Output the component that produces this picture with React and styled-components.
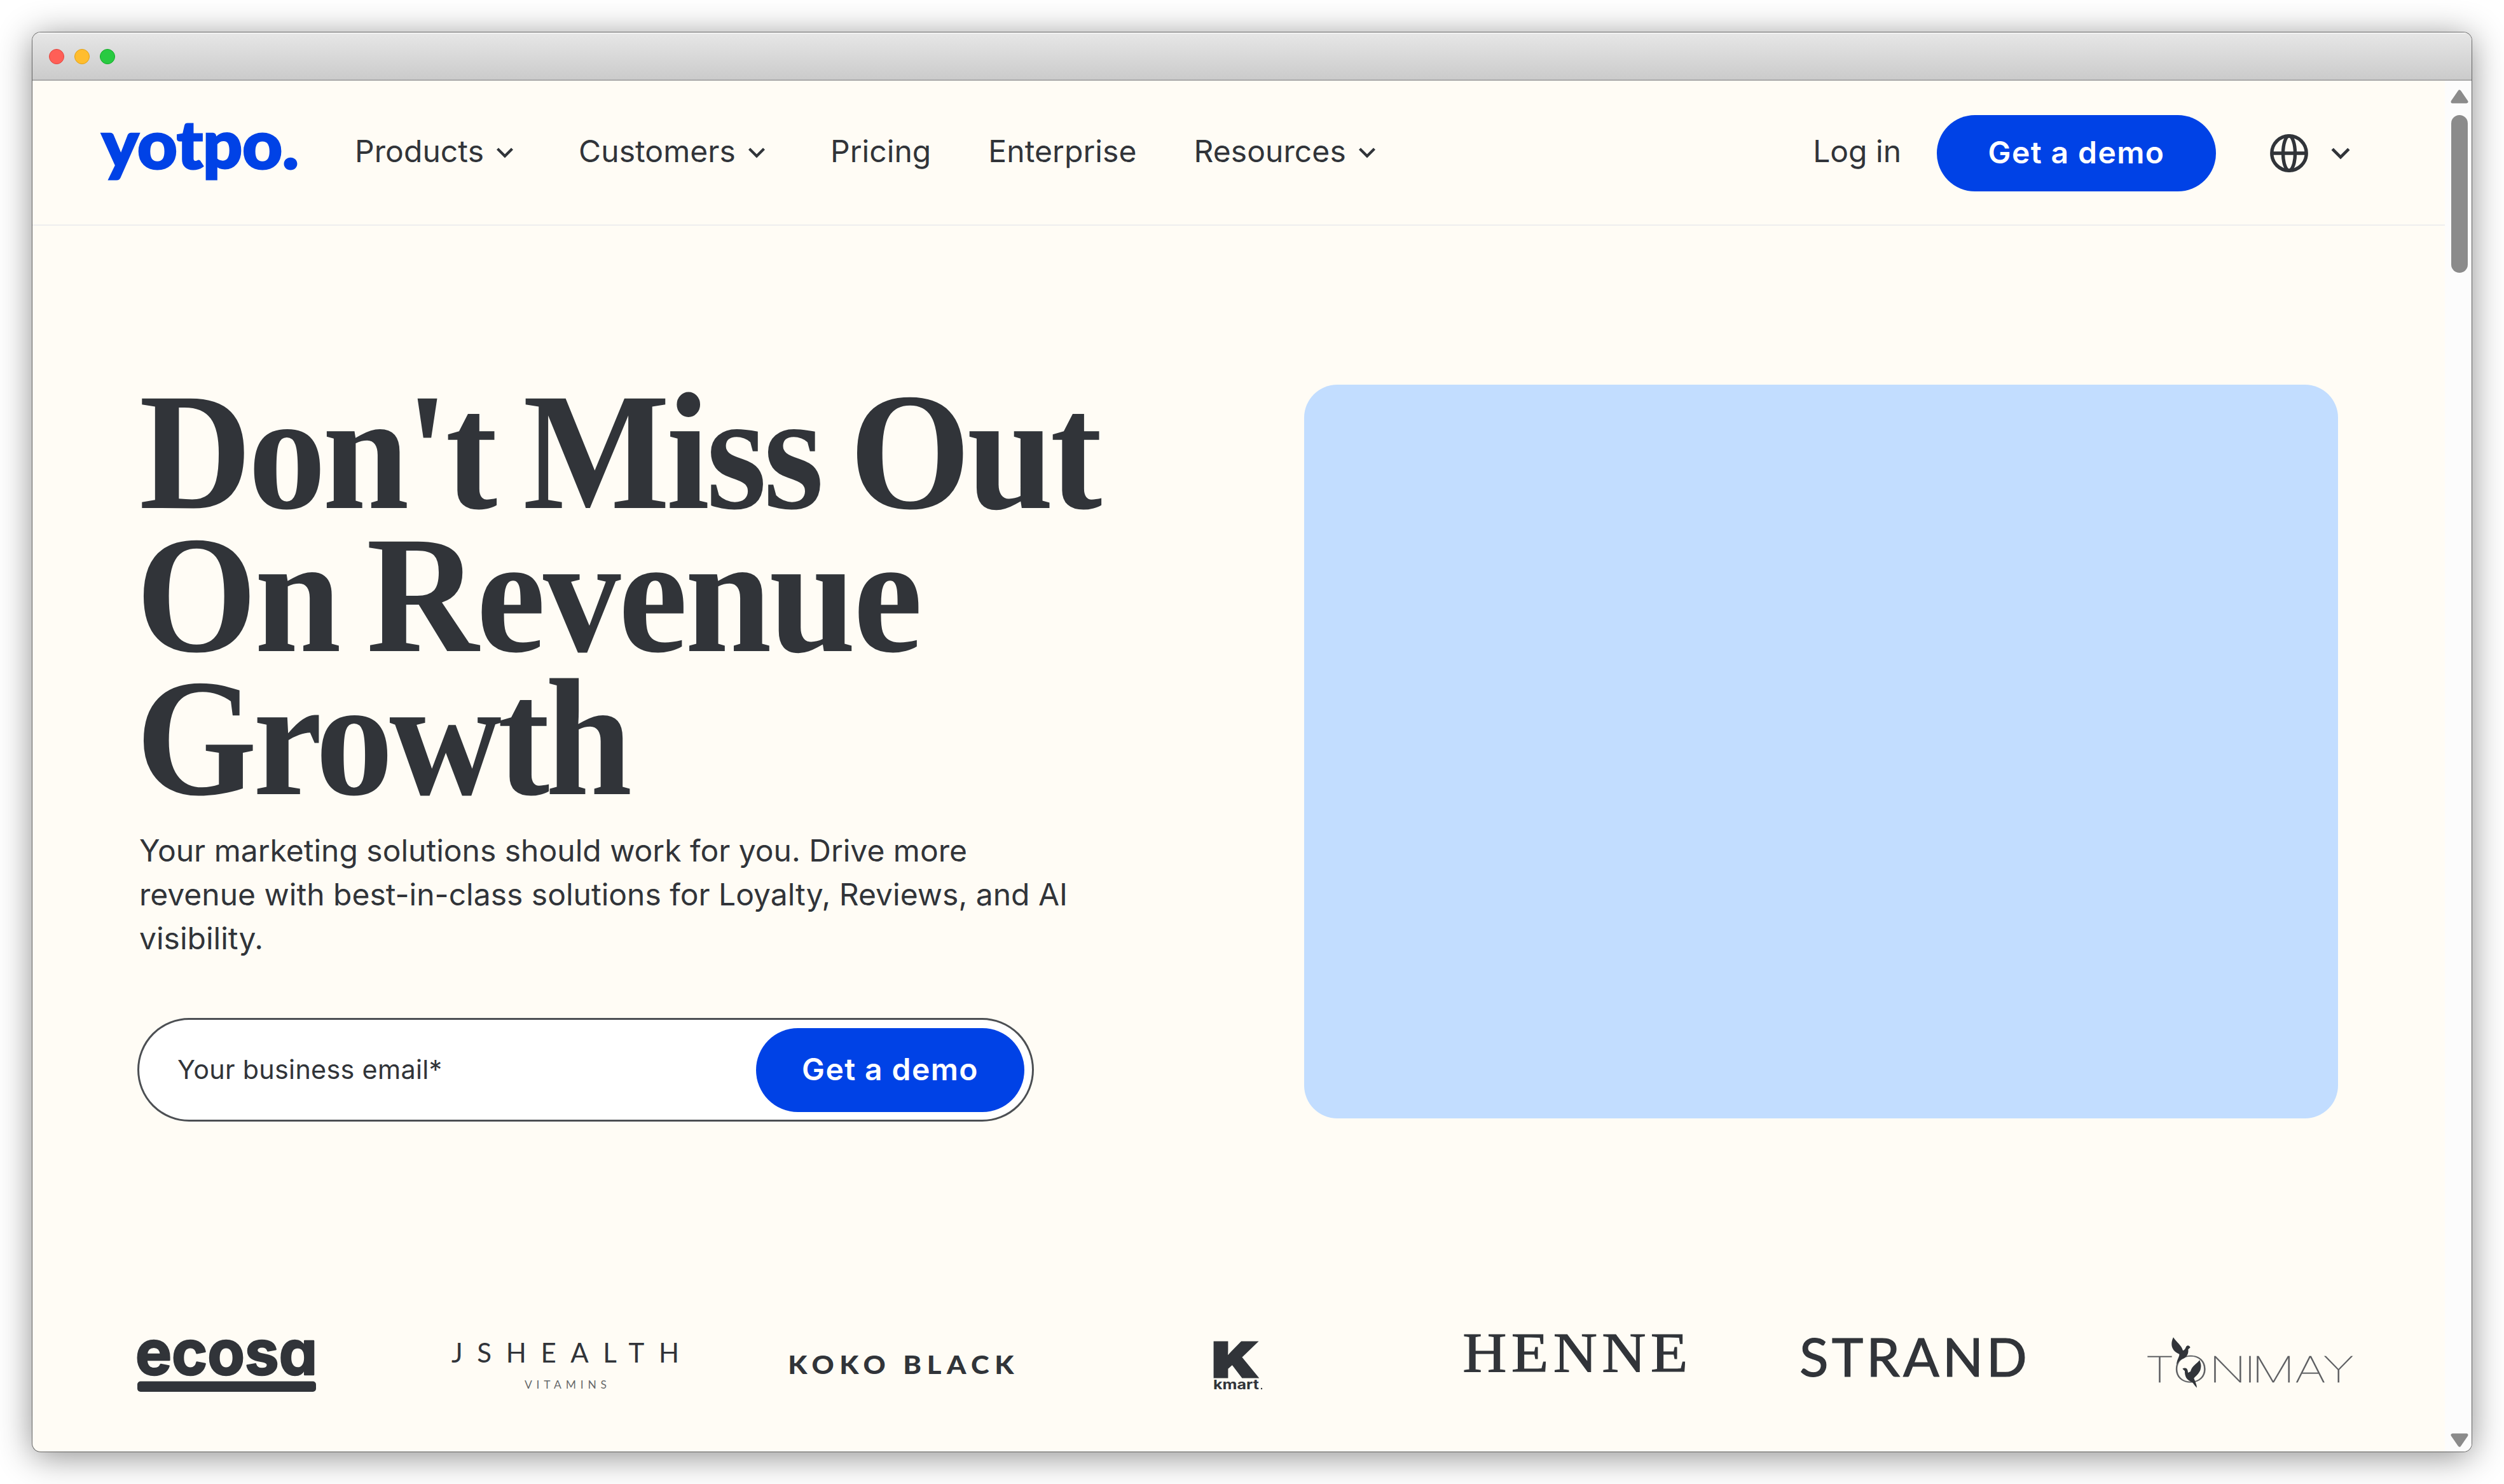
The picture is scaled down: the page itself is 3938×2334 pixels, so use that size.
import React from "react";
import styled, { createGlobalStyle } from "styled-components";

const ink = "#313439";
const blue = "#0042e6";
const cream = "#fffcf5";

const Global = createGlobalStyle`
  *, *::before, *::after { box-sizing: border-box; }
  html, body { margin: 0; background: #fff; overflow: hidden; }
  body {
    font-family: Inter, "Liberation Sans", sans-serif;
    color: ${ink};
    font-size: 48px;
  }
  button { font: inherit; border: 0; margin: 0; padding: 0; }
`;

const Desktop = styled.div`
  height: 2334px;
  padding: 51px;
`;

const Window = styled.div`
  display: flex;
  flex-direction: column;
  height: 2232px;
  border-radius: 13px;
  overflow: hidden;
  background: ${cream};
  box-shadow: 0 0 0 1px rgba(0, 0, 0, 0.5), 0 7px 54px rgba(0, 0, 0, 0.46);
`;

const TitleBar = styled.div`
  display: flex;
  align-items: center;
  gap: 16px;
  flex: none;
  height: 76px;
  padding-left: 26px;
  background: linear-gradient(#e6e6e6, #cbcbcb);
  border-top: 2px solid #f2f2f2;
  border-bottom: 2px solid #a9a9a9;
`;

const Light = styled.span`
  width: 24px;
  height: 24px;
  border-radius: 50%;
  background: ${(p) => p.$fill};
  border: 1px solid ${(p) => p.$edge};
`;

const Viewport = styled.div`
  display: flex;
  flex: 1;
  min-height: 0;
`;

const Page = styled.div`
  flex: 1;
  min-width: 0;
`;

const Header = styled.header`
  display: flex;
  align-items: center;
  height: 228px;
  padding: 2px 144px 0 105px;
  border-bottom: 2px solid #eeeeee;
`;

const Brand = styled.svg`
  flex: none;
  width: 320px;
  height: 120px;
  overflow: visible;
`;

const Nav = styled.nav`
  display: flex;
  gap: 90px;
  margin-left: 82px;
  padding-bottom: 7px;
`;

const NavItem = styled.a`
  display: flex;
  align-items: center;
  line-height: 58px;
  letter-spacing: 0.07px;
  white-space: nowrap;
`;

const NavChevron = styled.svg`
  width: 34px;
  height: 34px;
  margin: 4px 9px 0 16px;
`;

const Actions = styled.div`
  display: flex;
  align-items: center;
  margin-left: auto;
`;

const LogIn = styled.a`
  margin-right: 56px;
  padding-bottom: 7px;
  line-height: 58px;
  white-space: nowrap;
`;

const Cta = styled.button`
  display: flex;
  align-items: center;
  justify-content: center;
  flex: none;
  width: ${(p) => (p.$tall ? 422 : 439)}px;
  height: ${(p) => (p.$tall ? 132 : 120)}px;
  padding-bottom: 3px;
  border-radius: 70px;
  background: ${blue};
  color: #fff;
  font-weight: 600;
  letter-spacing: 1.4px;
  white-space: nowrap;
`;

const Language = styled.div`
  display: flex;
  align-items: center;
  gap: 30px;
  margin-left: 83px;
  padding-right: 1px;
`;

const GlobeIcon = styled.svg`
  width: 64px;
  height: 64px;
`;

const LangChevron = styled.svg`
  width: 38px;
  height: 38px;
`;

const Hero = styled.section`
  display: flex;
  justify-content: space-between;
  padding: 243px 168px 0 165px;
`;

const Pitch = styled.div`
  width: 1520px;
`;

const Headline = styled.h1`
  margin: 0 0 30px 3px;
  font-family: "Liberation Serif", serif;
  font-weight: 700;
  font-size: 263px;
  line-height: 225px;
`;

const HeadlineRow = styled.span`
  display: block;
  width: max-content;
  margin-left: ${(p) => p.$outdent || 0}px;
  white-space: nowrap;
  letter-spacing: ${(p) => p.$track}px;
  word-spacing: ${(p) => p.$gap || 0}px;
  transform: scaleX(0.93);
  transform-origin: left center;
`;

const Lead = styled.p`
  width: 1480px;
  margin: 0 0 91px 3px;
  line-height: 69px;
`;

const EmailForm = styled.div`
  display: flex;
  align-items: center;
  justify-content: space-between;
  width: 1410px;
  height: 163px;
  padding: 0 12px 0 60px;
  border: 3px solid #4c4f53;
  border-radius: 82px;
  background: #fff;
`;

const Placeholder = styled.span`
  padding-bottom: 2px;
  font-size: 41.3px;
  letter-spacing: 0.3px;
`;

const HeroMedia = styled.div`
  width: 1626px;
  height: 1154px;
  margin-top: 7px;
  border-radius: 52px;
  background: #c2ddff;
`;

const Clients = styled.section`
  display: grid;
  grid-template-columns: repeat(7, 530.3px);
  justify-items: center;
  margin-top: 316px;
  padding-left: 40px;
`;

const ClientLogo = styled.svg`
  width: 370px;
  height: 120px;
  overflow: visible;
  fill: ${ink};
`;

const RoundedWord = styled.text`
  font-feature-settings: "cv11";
  stroke: ${ink};
  stroke-linejoin: round;
`;

const Scrollbar = styled.div`
  display: flex;
  flex-direction: column;
  align-items: center;
  flex: none;
  width: 42px;
  padding: 13px 0 6px 4px;
  background: #fcfcfc;
`;

const Arrow = styled.svg`
  flex: none;
  width: 30px;
  height: 24px;
  fill: #8b8b8b;
  stroke: #8b8b8b;
  stroke-width: 5;
  stroke-linejoin: round;
`;

const Thumb = styled.div`
  width: 26px;
  height: 248px;
  margin: 17px 0 auto;
  border-radius: 13px;
  background: #8b8b8b;
`;

const Chevron = ({ as: Icon }) => (
  <Icon viewBox="0 0 34 34" fill="none" stroke={ink} strokeWidth="4.2">
    <path d="M5.5 11 L17 22.5 L28.5 11" />
  </Icon>
);

const navigation = [
  { label: "Products", menu: true },
  { label: "Customers", menu: true },
  { label: "Pricing" },
  { label: "Enterprise" },
  { label: "Resources", menu: true },
];

const Ecosa = () => (
  <ClientLogo viewBox="0 0 370 120">
    <RoundedWord x="42" y="82" fontFamily="Inter" fontWeight="700" fontSize="97" textLength="286" lengthAdjust="spacingAndGlyphs" strokeWidth="2.5">ecosa</RoundedWord>
    <rect x="45" y="92.5" width="281" height="16.5" rx="5" />
  </ClientLogo>
);

const JsHealth = () => (
  <ClientLogo viewBox="0 0 370 120">
    <text x="9" y="63" fontFamily="Lato" fontSize="42" textLength="358">JSHEALTH</text>
    <text x="124" y="104" fontFamily="Lato" fontSize="17.5" textLength="129" fillOpacity="0.75">VITAMINS</text>
  </ClientLogo>
);

const KokoBlack = () => (
  <ClientLogo viewBox="0 0 370 120">
    <text transform="scale(1.1 1)" x="6.5" y="81" fontFamily="Lato" fontWeight="900" fontSize="39.5" textLength="323">KOKO BLACK</text>
  </ClientLogo>
);

const Kmart = () => (
  <ClientLogo viewBox="0 0 370 120">
    <text x="144" y="85.5" fontFamily="Inter" fontWeight="900" fontSize="75" textLength="73" lengthAdjust="spacingAndGlyphs" stroke={ink} strokeWidth="3">K</text>
    <text x="146" y="105" fontFamily="Inter" fontWeight="700" fontSize="20.5" textLength="72" lengthAdjust="spacingAndGlyphs">kmart</text>
    <circle cx="222" cy="104" r="1.2" />
  </ClientLogo>
);

const Henne = () => (
  <ClientLogo viewBox="0 0 370 120">
    <text transform="scale(1.09 1)" x="7.5" y="77" fontFamily="Liberation Serif" fontSize="88" textLength="325" stroke={ink} strokeWidth="1">HENNE</text>
  </ClientLogo>
);

const Strand = () => (
  <ClientLogo viewBox="0 0 370 120">
    <text x="7" y="85" fontFamily="Lato" fontSize="84" textLength="358" stroke={ink} strokeWidth="1.2">STRAND</text>
  </ClientLogo>
);

const Tonimay = () => (
  <ClientLogo viewBox="0 0 370 120">
    <text transform="scale(1.35 1)" x="14.8 47.2 89.6 130.4 139.3 189.6 222.4" y="94" fontFamily="Inter" fontWeight="100" fontSize="56.5" fillOpacity="0.75" stroke={ink} strokeOpacity="0.5" strokeWidth="0.8">TONIMAY</text>
    <g transform="translate(7 15) scale(0.3333)">
      <path d="M174 25 C166 40 163 60 170 76 C176 90 188 98 202 104 C204 116 190 128 189 156 C195 140 208 130 220 126 C236 120 247 104 244 82 L254 73 C250 62 240 61 235 68 C230 76 230 84 219 87 C212 62 190 50 174 25Z" />
      <path d="M217 173 L228 184 C228 208 234 226 262 236 C270 244 276 254 285 263 C285 248 276 232 271 218 C284 204 300 192 303 172 C307 154 302 146 298 132 C286 150 262 158 255 186 L243 192 C243 172 232 164 217 173Z" />
    </g>
  </ClientLogo>
);

export default function App() {
  return (
    <>
      <Global />
      <Desktop>
        <Window>
          <TitleBar>
            <Light $fill="#ff5f57" $edge="#e2463f" />
            <Light $fill="#ffbd2e" $edge="#e1a116" />
            <Light $fill="#28ca41" $edge="#12ac28" />
          </TitleBar>
          <Viewport>
            <Page>
              <Header>
                <Brand viewBox="0 0 320 120" fill={blue}>
                  <text x="4" y="83.5" fontFamily="Lato" fontWeight="900" fontSize="104" textLength="310" lengthAdjust="spacingAndGlyphs" stroke={blue} strokeWidth="3">yotpo.</text>
                </Brand>
                <Nav>
                  {navigation.map((item) => (
                    <NavItem key={item.label}>
                      {item.label}
                      {item.menu && <Chevron as={NavChevron} />}
                    </NavItem>
                  ))}
                </Nav>
                <Actions>
                  <LogIn>Log in</LogIn>
                  <Cta>Get a demo</Cta>
                  <Language>
                    <GlobeIcon viewBox="0 0 64 64" fill="none" stroke={ink} strokeWidth="5.4">
                      <circle cx="32" cy="32" r="27.2" />
                      <ellipse cx="32" cy="32" rx="9.5" ry="27.2" />
                      <path d="M4.5 32 H59.5" />
                    </GlobeIcon>
                    <Chevron as={LangChevron} />
                  </Language>
                </Actions>
              </Header>
              <Hero>
                <Pitch>
                  <Headline>
                    <HeadlineRow $track={-5.7} $gap={-11}>Don't Miss Out</HeadlineRow>
                    <HeadlineRow $track={-4} $gap={-15} $outdent={-5}>On Revenue</HeadlineRow>
                    <HeadlineRow $track={-6.6} $outdent={-5}>Growth</HeadlineRow>
                  </Headline>
                  <Lead>
                    Your marketing solutions should work for you. Drive more
                    revenue with best-in-class solutions for Loyalty, Reviews, and AI
                    visibility.
                  </Lead>
                  <EmailForm>
                    <Placeholder>Your business email*</Placeholder>
                    <Cta $tall>Get a demo</Cta>
                  </EmailForm>
                </Pitch>
                <HeroMedia />
              </Hero>
              <Clients>
                <Ecosa />
                <JsHealth />
                <KokoBlack />
                <Kmart />
                <Henne />
                <Strand />
                <Tonimay />
              </Clients>
            </Page>
            <Scrollbar>
              <Arrow viewBox="0 0 30 24">
                <path d="M15 4 L26 20 H4 Z" />
              </Arrow>
              <Thumb />
              <Arrow viewBox="0 0 30 24">
                <path d="M15 20 L4 4 H26 Z" />
              </Arrow>
            </Scrollbar>
          </Viewport>
        </Window>
      </Desktop>
    </>
  );
}
